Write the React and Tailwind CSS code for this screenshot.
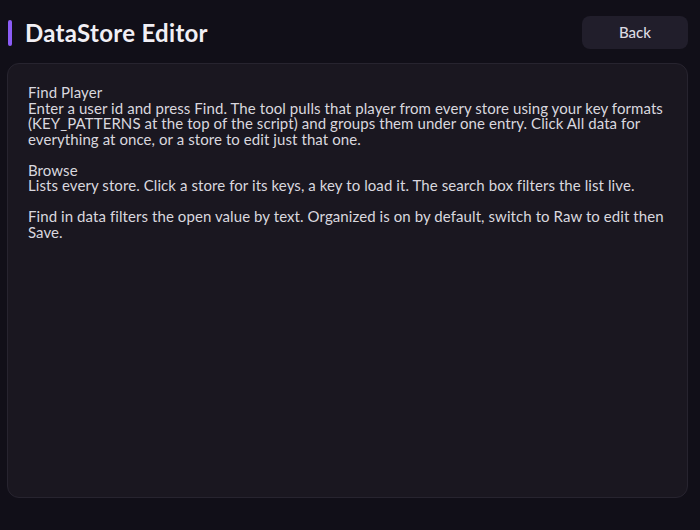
import React from 'react';

const help = `Find Player
Enter a user id and press Find. The tool pulls that player from every store using your key formats (KEY_PATTERNS at the top of the script) and groups them under one entry. Click All data for everything at once, or a store to edit just that one.

Browse
Lists every store. Click a store for its keys, a key to load it. The search box filters the list live.

Find in data filters the open value by text. Organized is on by default, switch to Raw to edit then Save.`;

const App = () => {
  return (
    <div className="w-[700px] h-[530px] bg-[#110f18] flex flex-col pl-[7px] pr-[12px] pt-[16px] pb-[32px] font-['Lato',sans-serif]">
      {/* Header */}
      <div className="flex items-center justify-between pl-px">
        <div className="flex items-center gap-[13px]">
          <span className="w-[4px] h-[26px] rounded-full bg-[#8b5cf6]" />
          <h1 className="text-[24px] leading-[30px] font-bold text-[#f1eff5] tracking-[0.3px]">DataStore Editor</h1>
        </div>
        <button className="w-[106px] h-[33px] rounded-[8px] bg-[#211e2b] text-[#dcdae2] text-[15px] font-medium">
          Back
        </button>
      </div>

      {/* Help panel */}
      <div className="mt-[14px] flex-1 rounded-[12px] border border-[#27242f] bg-[#1a1720] px-[20px] pt-[21px]">
        <p className="whitespace-pre-wrap text-[15px] leading-[15.5px] tracking-[0.08px] text-[#d9d7df]">{help}</p>
      </div>
    </div>
  );
};

export default App;
